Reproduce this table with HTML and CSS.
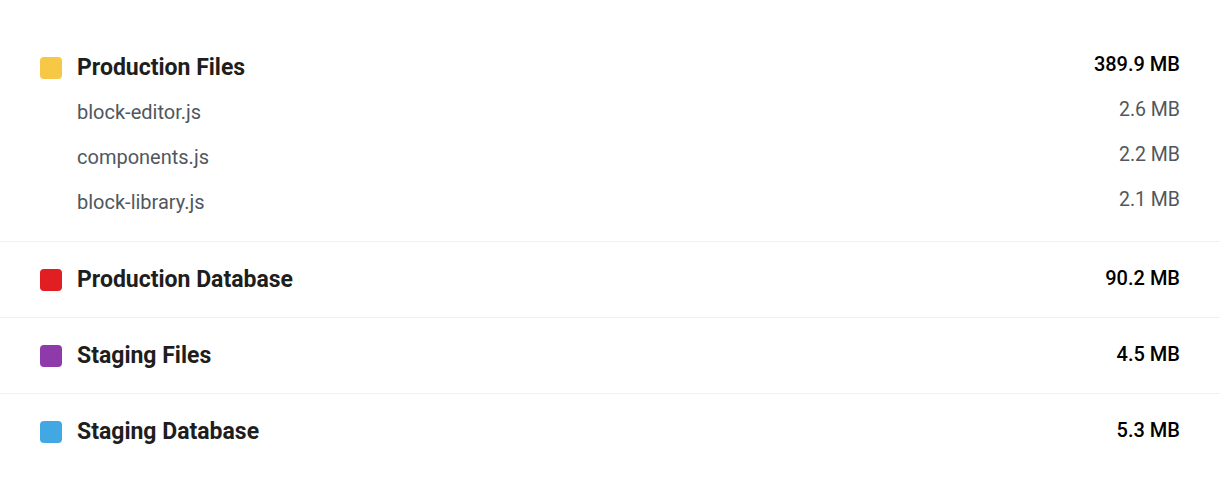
FILE: index.html
```html
<!DOCTYPE html>
<html lang="en">
  <head>
    <meta charset="UTF-8" />
    <meta name="viewport" content="width=device-width, initial-scale=1.0" />
    <title>Storage usage</title>
    <link rel="stylesheet" href="styles.css">
  </head>
  <body>
    <div class="usage">
      <!-- production files, with the biggest files listed -->
      <div class="group">
        <div class="head">
          <span class="swatch swatch-yellow"></span>
          <span class="name">Production Files</span>
          <span class="size size-top">389.9 MB</span>
        </div>
        <ul class="files">
          <li><span>block-editor.js</span><span class="file-size">2.6 MB</span></li>
          <li><span>components.js</span><span class="file-size">2.2 MB</span></li>
          <li><span>block-library.js</span><span class="file-size">2.1 MB</span></li>
        </ul>
      </div>

      <div class="group">
        <div class="head">
          <span class="swatch swatch-red"></span>
          <span class="name">Production Database</span>
          <span class="size">90.2 MB</span>
        </div>
      </div>

      <div class="group">
        <div class="head">
          <span class="swatch swatch-purple"></span>
          <span class="name">Staging Files</span>
          <span class="size">4.5 MB</span>
        </div>
      </div>

      <div class="group">
        <div class="head">
          <span class="swatch swatch-blue"></span>
          <span class="name">Staging Database</span>
          <span class="size">5.3 MB</span>
        </div>
      </div>
    </div>
  </body>
</html>
```

FILE: styles.css
```css
body {
  margin: 0;
  padding: 0;
  background: #fff;
  font-family: Roboto, "Liberation Sans", Arial, sans-serif;
  color: #1e1e1e;
}
.usage {
  padding-top: 30px;
}
.group {
  padding: 22px 40px;
  border-bottom: 1px solid #f0f0f0;
}
.group:last-child {
  border-bottom: none;
}
.head {
  display: flex;
  align-items: center;
  height: 31px;
}
.swatch {
  width: 22px;
  height: 22px;
  border-radius: 4px;
  margin-right: 15px;
  flex-shrink: 0;
}
.swatch-yellow {
  background: #f6c846;
}
.swatch-red {
  background: #e11f23;
}
.swatch-purple {
  background: #8e3aab;
}
.swatch-blue {
  background: #42a8e4;
}
.name {
  flex: 1;
  font-size: 23px;
  font-weight: bold;
}
.size {
  font-size: 20px;
  font-weight: 500;
  color: #000;
  margin-top: -3px;
}
.size-top {
  margin-top: -7px;
}
.files {
  list-style: none;
  margin: 14px 0 2px;
  padding: 0 0 0 37px;
  display: flex;
  flex-direction: column;
  gap: 15px;
}
.files li {
  display: flex;
  justify-content: space-between;
  align-items: center;
  height: 30px;
  font-size: 20px;
  color: #50575e;
}
.file-size {
  font-size: 19.5px;
  margin-top: -6px;
}
```
